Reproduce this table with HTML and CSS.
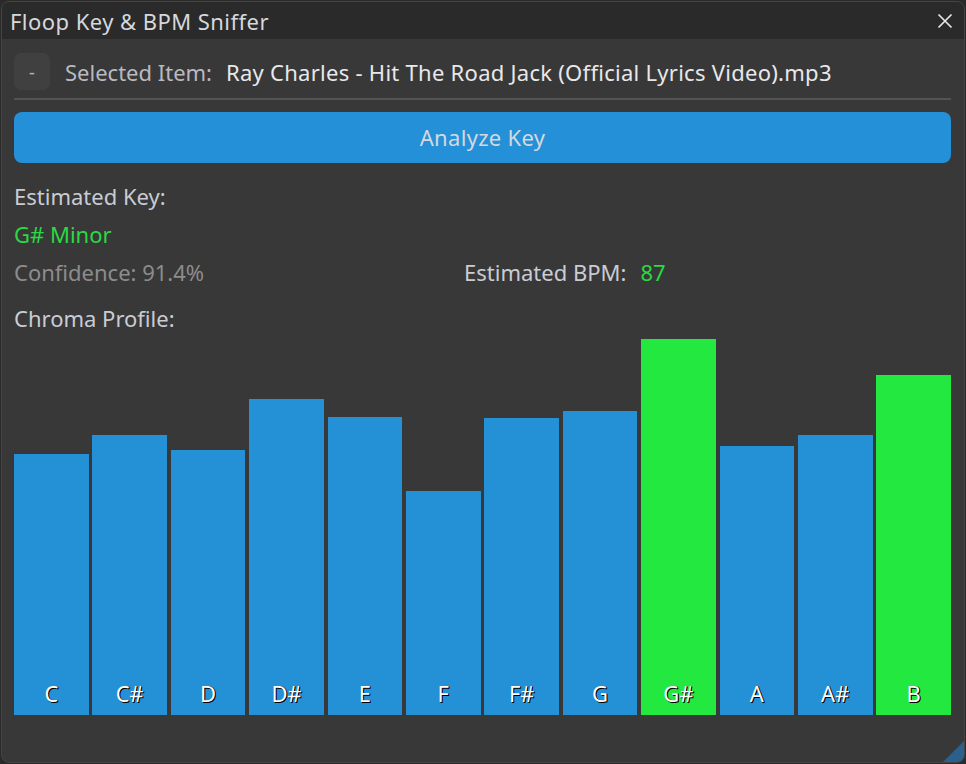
FILE: index.html
```html
<!DOCTYPE html>
<html>
<head>
<meta charset="utf-8">
<link rel="stylesheet" href="styles.css">
</head>
<body>
<div class="window">
  <div class="titlebar">
    <span class="title">Floop Key &amp; BPM Sniffer</span>
    <svg class="close" width="16" height="16" viewBox="0 0 16 16"><path d="M1.5 1.5 L14.5 14.5 M14.5 1.5 L1.5 14.5" stroke="#e6e6e6" stroke-width="1.7"/></svg>
  </div>
  <div class="content">
    <div class="item-row">
      <div class="minus-btn">-</div>
      <span class="muted-label">Selected Item:</span>
      <span class="filename">Ray Charles - Hit The Road Jack (Official Lyrics Video).mp3</span>
    </div>
    <div class="separator"></div>
    <div class="analyze-btn">Analyze Key</div>
    <div class="line key-label">Estimated Key:</div>
    <div class="line key-value">G# Minor</div>
    <div class="line stats-row">
      <span class="confidence">Confidence: 91.4%</span>
      <span class="bpm"><span class="bpm-label">Estimated BPM:</span><span class="bpm-value">87</span></span>
    </div>
    <div class="line chroma-label">Chroma Profile:</div>
    <div class="chart">
      <div class="bar" style="height:261px"><span>C</span></div>
      <div class="bar" style="height:280px"><span>C#</span></div>
      <div class="bar" style="height:265px"><span>D</span></div>
      <div class="bar" style="height:316px"><span>D#</span></div>
      <div class="bar" style="height:298px"><span>E</span></div>
      <div class="bar" style="height:224px"><span>F</span></div>
      <div class="bar" style="height:297px"><span>F#</span></div>
      <div class="bar" style="height:304px"><span>G</span></div>
      <div class="bar hot" style="height:376px"><span>G#</span></div>
      <div class="bar" style="height:269px"><span>A</span></div>
      <div class="bar" style="height:280px"><span>A#</span></div>
      <div class="bar hot" style="height:340px"><span>B</span></div>
    </div>
  </div>
  <div class="grip"></div>
</div>
</body>
</html>
```
FILE: styles.css
```css
html, body {
  margin: 0;
  padding: 0;
  background: #2a2a2a;
}
body {
  font-family: "Noto Sans", "Open Sans", sans-serif;
  font-size: 22px;
  color: #c9ccd4;
}
.window {
  position: relative;
  width: 964px;
  height: 762px;
  margin: 1px 0 0 1px;
  background: #383838;
  border: 1px solid #444;
  border-radius: 8px;
  overflow: hidden;
  box-sizing: border-box;
}
.titlebar {
  height: 37px;
  background: #2a2a2a;
  display: flex;
  align-items: center;
  justify-content: space-between;
  padding: 0 11px 0 8px;
}
.title {
  color: #d6d8dc;
  font-size: 22px;
  letter-spacing: 0.45px;
}
.close {
  display: block;
}
.content {
  padding: 14px 13px 0 12px;
}
.item-row {
  display: flex;
  align-items: center;
  height: 37px;
}
.minus-btn {
  width: 36px;
  height: 37px;
  background: #404040;
  border-radius: 7px;
  color: #b8b8b8;
  display: flex;
  align-items: center;
  justify-content: center;
  font-size: 18px;
  margin-right: 15px;
}
.muted-label {
  color: #b8bac0;
  margin-right: 14px;
}
.filename {
  color: #e8e8ea;
  letter-spacing: 0.27px;
}
.separator {
  height: 2px;
  background: #535353;
  margin-top: 8px;
}
.analyze-btn {
  margin-top: 12px;
  height: 51px;
  background: #2490d7;
  border-radius: 8px;
  color: #d4d8e0;
  display: flex;
  align-items: center;
  justify-content: center;
  padding-bottom: 2px;
  box-sizing: border-box;
  letter-spacing: 0.3px;
}
.line {
  height: 38px;
  display: flex;
  align-items: center;
}
.key-label {
  margin-top: 14px;
}
.key-value {
  color: #2bd843;
}
.confidence {
  color: #8c8c8c;
  width: 450px;
}
.bpm-label {
  margin-right: 14px;
}
.bpm-value {
  color: #2bd843;
}
.chroma-label {
  margin-top: 8px;
}
.chart {
  margin-top: 2px;
  height: 376px;
  width: 937px;
  display: grid;
  grid-template-columns: repeat(12, 1fr);
  column-gap: 3.7px;
  align-items: end;
}
.bar {
  background: #2490d6;
  display: flex;
  align-items: flex-end;
  justify-content: center;
}
.bar.hot {
  background: #22e840;
}
.bar span {
  color: #ffffff;
  font-size: 22px;
  line-height: 1;
  margin-bottom: 11px;
  text-shadow: 1px 1px 0 #000, 1px 0 0 #222;
}
.grip {
  position: absolute;
  right: 0;
  bottom: 0;
  width: 0;
  height: 0;
  border-left: 21px solid transparent;
  border-bottom: 21px solid #2b5f8c;
}
```
